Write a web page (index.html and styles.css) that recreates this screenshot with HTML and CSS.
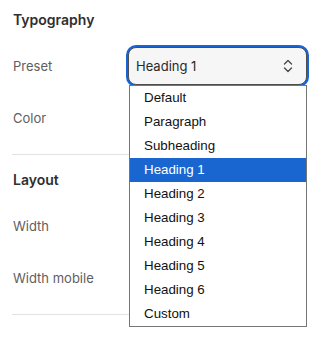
FILE: index.html
```html
<!DOCTYPE html>
<html>
<head>
<meta charset="utf-8">
<link rel="stylesheet" href="styles.css">
</head>
<body>
<div class="panel">
  <section class="section first">
    <h2 class="heading">Typography</h2>
    <div class="row">
      <span class="label">Preset</span>
      <div class="select-wrap">
        <div class="select">
          <span class="value">Heading 1</span>
          <svg class="chev" width="10" height="16" viewBox="0 0 10 16"><path d="M1.5 6 L5 2.5 L8.5 6" fill="none" stroke="#4a4a4a" stroke-width="1.4" stroke-linecap="round" stroke-linejoin="round"/><path d="M1.5 10 L5 13.5 L8.5 10" fill="none" stroke="#4a4a4a" stroke-width="1.4" stroke-linecap="round" stroke-linejoin="round"/></svg>
        </div>
        <ul class="list">
          <li>Default</li>
          <li>Paragraph</li>
          <li>Subheading</li>
          <li class="active">Heading 1</li>
          <li>Heading 2</li>
          <li>Heading 3</li>
          <li>Heading 4</li>
          <li>Heading 5</li>
          <li>Heading 6</li>
          <li>Custom</li>
        </ul>
      </div>
    </div>
    <div class="row"><span class="label">Color</span></div>
  </section>
  <section class="section second">
    <h2 class="heading">Layout</h2>
    <div class="row"><span class="label">Width</span></div>
    <div class="row"><span class="label">Width mobile</span></div>
  </section>
</div>
</body>
</html>
```
FILE: styles.css
```css
* { box-sizing: border-box; }
html, body { margin: 0; padding: 0; background: #fff; }
body { font-family: Inter, "Noto Sans", sans-serif; width: 317px; height: 346px; overflow: hidden; }
.panel { padding: 0 12px; }
.section { display: flex; flex-direction: column; border-bottom: 1px solid #e3e3e3; }
.first { padding: 10px 0 16px; }
.second { padding: 15px 0 16px; }
.heading { margin: 0 0 16px 1px; font-size: 14px; font-weight: 600; line-height: 20px; color: #2f2f2f; height: 20px; }
.row { display: flex; align-items: center; height: 40px; }
.row + .row { margin-top: 12px; }
.label { font-size: 13px; color: #5e5e5e; margin-left: 1px; flex: 1; }
.select-wrap { position: relative; width: 179px; margin-right: -2px; }
.select { height: 38px; border: 1px solid #4d4d4d; border-radius: 8px; background: #f6f6f6; box-shadow: 0 0 0 2px #1565d8; display: flex; align-items: center; justify-content: space-between; padding: 0 13px 0 7px; }
.value { font-size: 13px; color: #2a2a2a; }
.chev { display: block; }
.list { position: absolute; left: 1px; top: 38px; width: 178px; margin: 0; padding: 0; list-style: none; background: #fff; border: 1px solid #767676; font-family: "Liberation Sans", Arial, sans-serif; font-size: 13.333px; color: #111; z-index: 2; }
.list li { height: 24px; line-height: 24px; padding-left: 14px; }
.list li.active { background: #1a66d1; color: #fff; }
```
